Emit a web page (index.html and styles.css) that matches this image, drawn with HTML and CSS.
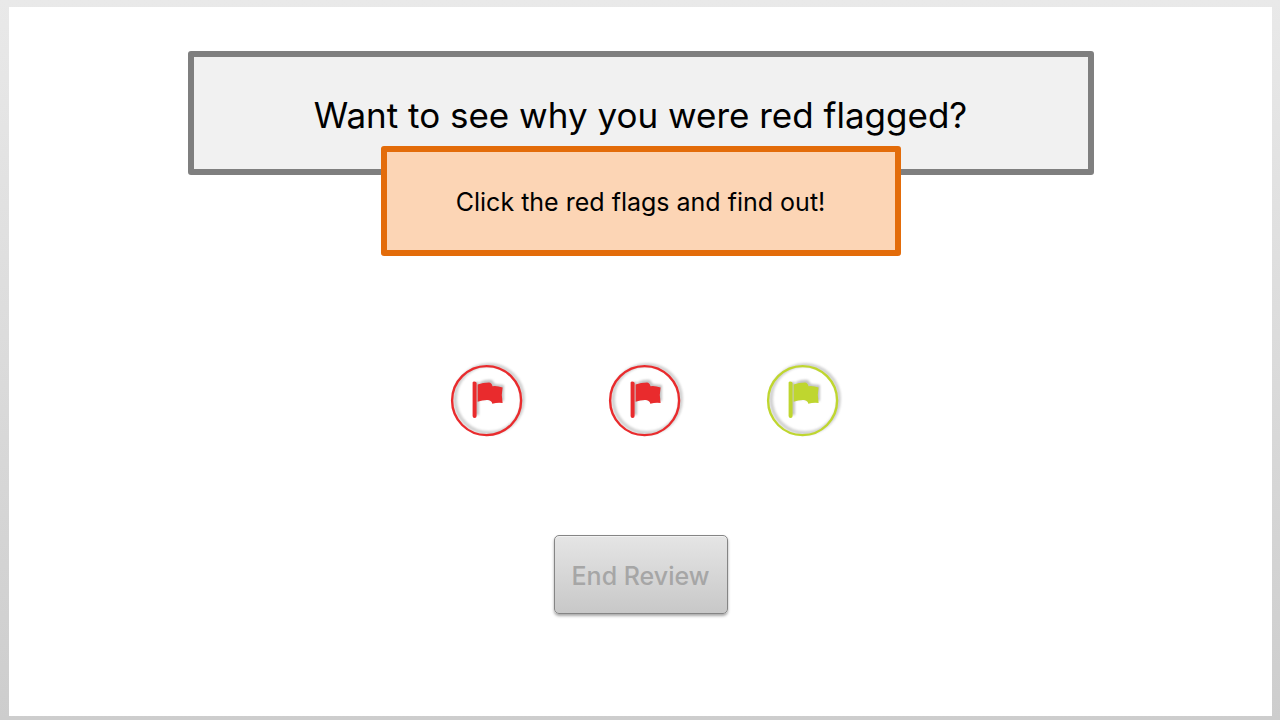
FILE: index.html
```html
<!DOCTYPE html>
<html lang="en">
<head>
<meta charset="utf-8">
<meta name="viewport" content="width=device-width, initial-scale=1">
<title>Red flag review</title>
<link rel="stylesheet" href="styles.css">
</head>
<body>
<svg class="symbols" aria-hidden="true">
  <symbol id="flag" viewBox="0 0 100 100">
    <g class="shade">
      <circle cx="52" cy="48" r="34" fill="none" stroke-width="4"/>
      <path stroke="none" d="M38 31h4v33h-4zM43 31Q49 28 55 29L58 33L67 34V50L55 50L52 48L43 49Z"/>
    </g>
    <circle cx="49.6" cy="49.6" r="34.5" fill="none" stroke="currentColor" stroke-width="2.4"/>
    <path fill="currentColor" d="M35.6 31.5Q35.6 30.5 37.3 30.5Q39.6 30.5 39.6 32V65Q39.6 67 37.6 67Q35.6 67 35.6 65ZM40.6 33.5Q46 31.5 52 31.5Q54.5 31.6 55.5 35.2Q60 34.5 65.6 36.6L64.8 44L65.6 52Q61 51 55.3 52.8Q54.8 49.5 51 49Q46 48.7 40.6 50.8Z"/>
  </symbol>
</svg>
<main class="slide">
  <h1 class="title">Want to see why you were red flagged?</h1>
  <p class="hint">Click the red flags and find out!</p>
  <div class="flags">
    <button class="flag red" type="button" aria-label="Red flag 1"><svg><use href="#flag"/></svg></button>
    <button class="flag red" type="button" aria-label="Red flag 2"><svg><use href="#flag"/></svg></button>
    <button class="flag green" type="button" aria-label="Green flag"><svg><use href="#flag"/></svg></button>
  </div>
  <button class="end" type="button" disabled>End Review</button>
</main>
</body>
</html>
```
FILE: styles.css
```css
* { box-sizing: border-box; }
body {
  margin: 0;
  min-height: 100vh;
  padding: 7px 8px 4px 9px;
  display: flex;
  background: linear-gradient(#e9e9e9, #cdcdcd);
  font-family: Inter, "Liberation Sans", sans-serif;
  color: #000;
}
.symbols { position: absolute; width: 0; height: 0; }
.slide {
  flex: 1;
  display: flex;
  flex-direction: column;
  align-items: center;
  padding: 44px 16px 32px;
  background: #fff;
}
.title {
  margin: 0;
  width: 100%;
  max-width: 906px;
  padding: 38px 24px 34px;
  border: 6px solid #7f7f7f;
  border-radius: 3px;
  background: #f1f1f1;
  font-size: 35px;
  line-height: 40px;
  font-weight: 400;
  text-align: center;
}
.hint {
  margin: -29px 0 0;
  width: 100%;
  max-width: 520px;
  padding: 34px 16px 32px;
  border: 6px solid #e36c0a;
  border-radius: 3px;
  background: #fcd5b5;
  font-size: 25px;
  line-height: 32px;
  text-align: center;
  z-index: 1;
}
.flags {
  display: flex;
  gap: 58px;
  margin-top: 95px;
  padding-left: 8px;
}
.flag {
  width: 100px;
  height: 100px;
  padding: 0;
  border: 0;
  background: none;
  cursor: pointer;
}
.flag svg { display: block; width: 100%; height: 100%; }
.red { color: #e92b2d; }
.green { color: #bfd62f; }
.shade {
  fill: #c4c4c4;
  stroke: #d2d2d2;
  filter: blur(1px);
}
.end {
  margin-top: 84px;
  width: 174px;
  height: 79px;
  padding: 2px 0 0;
  border: 1px solid #858585;
  border-radius: 5px;
  background: linear-gradient(#e5e5e5, #c8c8c8);
  box-shadow: 0 2px 3px rgba(0, 0, 0, 0.35), inset 0 1px 0 #f2f2f2;
  color: #a6a6a6;
  font: 500 25px/32px Inter, "Liberation Sans", sans-serif;
}
```
